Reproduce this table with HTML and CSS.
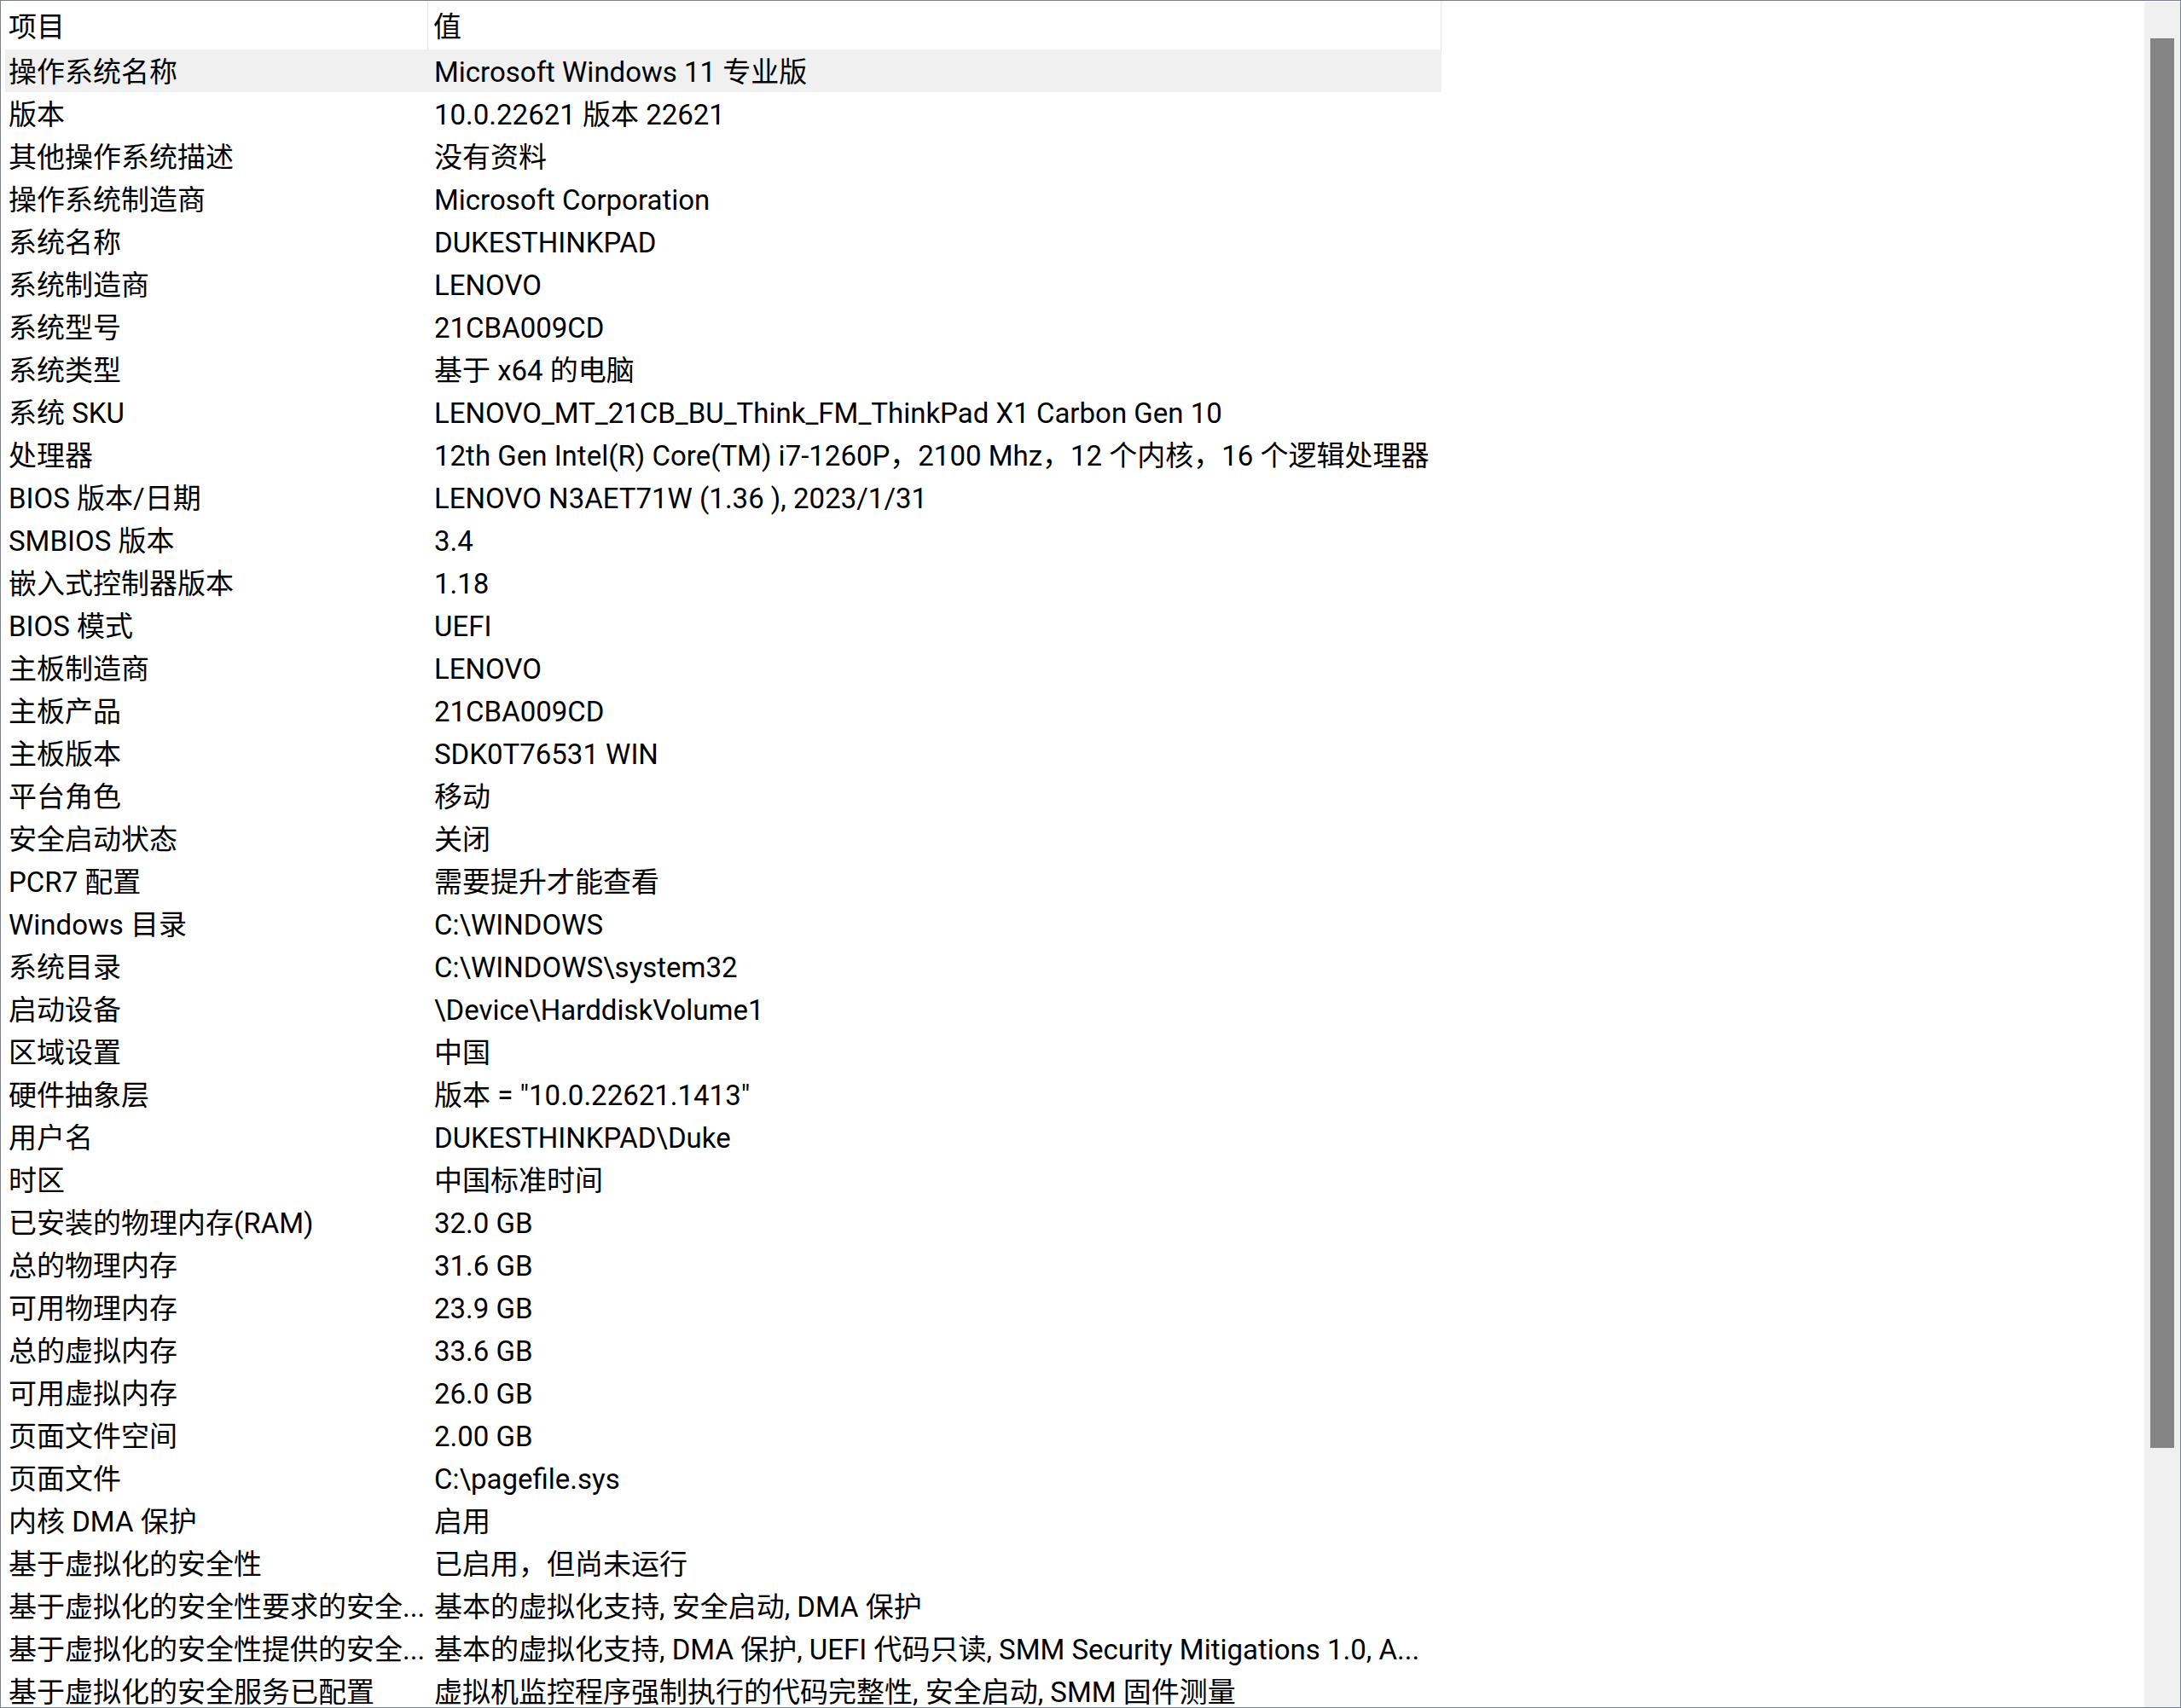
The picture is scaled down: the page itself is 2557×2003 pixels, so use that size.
FILE: index.html
```html
<!DOCTYPE html>
<html lang="zh-CN">
<head>
  <meta charset="UTF-8" />
  <title>系统摘要</title>
  <link rel="stylesheet" href="styles.css">
</head>
<body>
  <div class="window">
    <!-- List view -->
    <div class="list">
      <div class="list-header">
        <div class="head-cell">项目</div>
        <div class="head-cell">值</div>
      </div>
      <div class="rows">
        <div class="row selected"><div class="cell">操作系统名称</div><div class="cell">Microsoft Windows 11 专业版</div></div>
        <div class="row"><div class="cell">版本</div><div class="cell">10.0.22621 版本 22621</div></div>
        <div class="row"><div class="cell">其他操作系统描述</div><div class="cell">没有资料</div></div>
        <div class="row"><div class="cell">操作系统制造商</div><div class="cell">Microsoft Corporation</div></div>
        <div class="row"><div class="cell">系统名称</div><div class="cell">DUKESTHINKPAD</div></div>
        <div class="row"><div class="cell">系统制造商</div><div class="cell">LENOVO</div></div>
        <div class="row"><div class="cell">系统型号</div><div class="cell">21CBA009CD</div></div>
        <div class="row"><div class="cell">系统类型</div><div class="cell">基于 x64 的电脑</div></div>
        <div class="row"><div class="cell">系统 SKU</div><div class="cell">LENOVO_MT_21CB_BU_Think_FM_ThinkPad X1 Carbon Gen 10</div></div>
        <div class="row"><div class="cell">处理器</div><div class="cell">12th Gen Intel(R) Core(TM) i7-1260P，2100 Mhz，12 个内核，16 个逻辑处理器</div></div>
        <div class="row"><div class="cell">BIOS 版本/日期</div><div class="cell">LENOVO N3AET71W (1.36 ), 2023/1/31</div></div>
        <div class="row"><div class="cell">SMBIOS 版本</div><div class="cell">3.4</div></div>
        <div class="row"><div class="cell">嵌入式控制器版本</div><div class="cell">1.18</div></div>
        <div class="row"><div class="cell">BIOS 模式</div><div class="cell">UEFI</div></div>
        <div class="row"><div class="cell">主板制造商</div><div class="cell">LENOVO</div></div>
        <div class="row"><div class="cell">主板产品</div><div class="cell">21CBA009CD</div></div>
        <div class="row"><div class="cell">主板版本</div><div class="cell">SDK0T76531 WIN</div></div>
        <div class="row"><div class="cell">平台角色</div><div class="cell">移动</div></div>
        <div class="row"><div class="cell">安全启动状态</div><div class="cell">关闭</div></div>
        <div class="row"><div class="cell">PCR7 配置</div><div class="cell">需要提升才能查看</div></div>
        <div class="row"><div class="cell">Windows 目录</div><div class="cell">C:\WINDOWS</div></div>
        <div class="row"><div class="cell">系统目录</div><div class="cell">C:\WINDOWS\system32</div></div>
        <div class="row"><div class="cell">启动设备</div><div class="cell">\Device\HarddiskVolume1</div></div>
        <div class="row"><div class="cell">区域设置</div><div class="cell">中国</div></div>
        <div class="row"><div class="cell">硬件抽象层</div><div class="cell">版本 = "10.0.22621.1413"</div></div>
        <div class="row"><div class="cell">用户名</div><div class="cell">DUKESTHINKPAD\Duke</div></div>
        <div class="row"><div class="cell">时区</div><div class="cell">中国标准时间</div></div>
        <div class="row"><div class="cell">已安装的物理内存(RAM)</div><div class="cell">32.0 GB</div></div>
        <div class="row"><div class="cell">总的物理内存</div><div class="cell">31.6 GB</div></div>
        <div class="row"><div class="cell">可用物理内存</div><div class="cell">23.9 GB</div></div>
        <div class="row"><div class="cell">总的虚拟内存</div><div class="cell">33.6 GB</div></div>
        <div class="row"><div class="cell">可用虚拟内存</div><div class="cell">26.0 GB</div></div>
        <div class="row"><div class="cell">页面文件空间</div><div class="cell">2.00 GB</div></div>
        <div class="row"><div class="cell">页面文件</div><div class="cell">C:\pagefile.sys</div></div>
        <div class="row"><div class="cell">内核 DMA 保护</div><div class="cell">启用</div></div>
        <div class="row"><div class="cell">基于虚拟化的安全性</div><div class="cell">已启用，但尚未运行</div></div>
        <div class="row"><div class="cell">基于虚拟化的安全性要求的安全...</div><div class="cell">基本的虚拟化支持, 安全启动, DMA 保护</div></div>
        <div class="row"><div class="cell">基于虚拟化的安全性提供的安全...</div><div class="cell">基本的虚拟化支持, DMA 保护, UEFI 代码只读, SMM Security Mitigations 1.0, A...</div></div>
        <div class="row"><div class="cell">基于虚拟化的安全服务已配置</div><div class="cell">虚拟机监控程序强制执行的代码完整性, 安全启动, SMM 固件测量</div></div>
      </div>
    </div>
    <!-- Vertical scrollbar -->
    <div class="scrollbar">
      <div class="thumb"></div>
    </div>
  </div>
</body>
</html>
```

FILE: styles.css
```css
/* Global */
html, body {
  margin: 0;
  height: 100%;
  overflow: hidden;
  background-color: #ffffff;
}
body {
  font-family: Roboto, "Noto Sans CJK SC", sans-serif;
  font-size: 33px;
  color: #000000;
}
.window {
  display: flex;
  width: 2557px;
  height: 2003px;
  box-sizing: border-box;
  border: 1px solid #7b8089;
}
/* List view */
.list {
  flex: 1;
  padding: 1px 0 0 5px;
  overflow: hidden;
}
.list-header,
.row {
  display: grid;
  grid-template-columns: 496px 1188px;
  width: fit-content;
}
.list-header {
  height: 56px;
}
.head-cell {
  border-right: 1px solid #e5e5e5;
  padding-top: 3px;
  line-height: 53px;
  padding-left: 4px;
}
.head-cell + .head-cell {
  padding-left: 6px;
}
.row {
  height: 50px;
}
.row.selected {
  background-color: #f0f0f0;
}
.cell {
  padding: 3px 4px 0;
  line-height: 47px;
  white-space: nowrap;
  overflow: hidden;
}
.cell + .cell {
  padding: 3px 7px 0;
}
/* Scrollbar */
.scrollbar {
  width: 42px;
  margin-top: 1px;
  padding: 43px 7px 0;
  box-sizing: border-box;
  background-color: #f0f0f0;
}
.thumb {
  height: 1652px;
  background-color: #858585;
  border-top: 1px solid #7a7a7a;
}
```
